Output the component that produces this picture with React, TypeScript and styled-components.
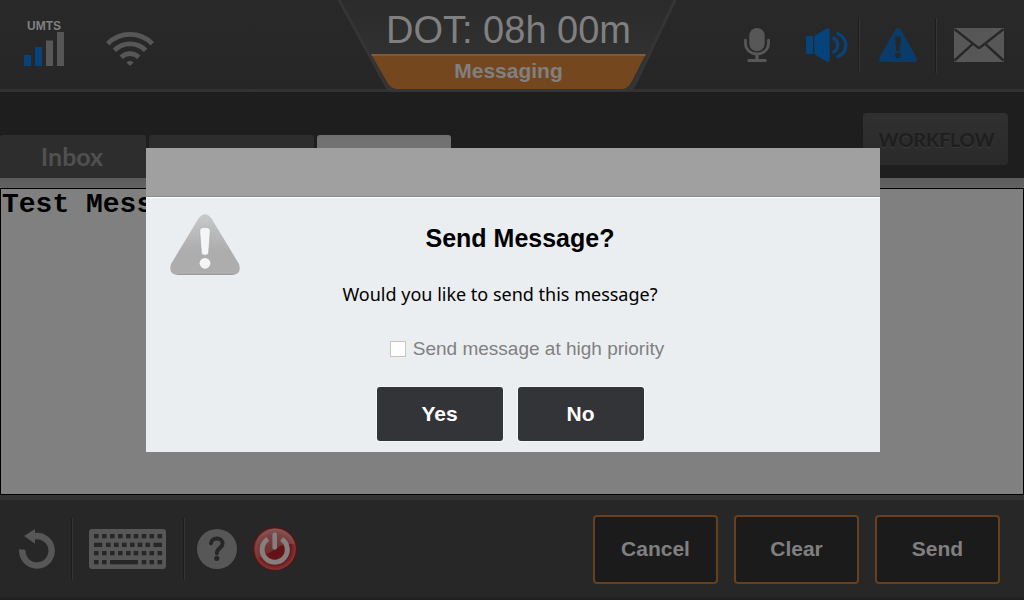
import React from "react";
import styled, { createGlobalStyle } from "styled-components";

const GlobalStyle = createGlobalStyle`
  *, *::before, *::after { box-sizing: border-box; }
  html, body { margin: 0; padding: 0; }
  body { background: #272727; font-family: "Liberation Sans", Arial, sans-serif; }
  button, input, textarea { font-family: inherit; margin: 0; }
`;

const grey = "#575757";
const blue = "#05437a";
const panel = "#272727";

const Screen = styled.div`
  display: flex;
  flex-direction: column;
  min-height: 100vh;
`;

const Header = styled.header`
  display: grid;
  grid-template-columns: 1fr 338px 1fr;
  height: 92px;
  padding-right: 10px;
  background: linear-gradient(#292929, #262626);
  border-bottom: 3px solid #323232;
`;

const StatusGroup = styled.div`
  display: flex;
  align-items: flex-start;
  gap: 42px;
  padding: 20px 0 0 24px;
`;

const Signal = styled.div`
  display: flex;
  flex-direction: column;
  align-items: center;
  font-size: 12px;
  line-height: 12px;
  font-weight: bold;
  color: #808080;
`;

const WifiBox = styled.div`
  padding-top: 12px;
`;

const Badge = styled.div`
  position: relative;
  height: 92px;
`;

const BadgeShape = styled.svg`
  position: absolute;
  inset: 0;
`;

const BadgeText = styled.div`
  position: relative;
  padding-left: 3px;
  text-align: center;
  color: #808080;
`;

const Clock = styled.div`
  padding-top: 4px;
  height: 54px;
  font-size: 38px;
  line-height: 52px;
`;

const Section = styled.h1`
  margin: 0;
  font-size: 21px;
  line-height: 34px;
  font-weight: bold;
`;

const IconGroup = styled.div`
  display: flex;
  justify-content: flex-end;
  align-items: center;
  padding: 0 10px 2px 0;
`;

const IconButton = styled.button<{ $after?: number }>`
  display: flex;
  padding: 0;
  border: 0;
  background: none;
  margin-right: ${(p) => p.$after ?? 0}px;
`;

const Divider = styled.span<{ $before: number; $after: number; $tall?: boolean }>`
  width: 2px;
  height: ${(p) => (p.$tall ? 62 : 55)}px;
  margin: 0 ${(p) => p.$after}px 0 ${(p) => p.$before}px;
  background: linear-gradient(to right, #1d1d1d 50%, #353535 50%);
`;

const TabBar = styled.nav`
  display: flex;
  justify-content: space-between;
  height: 86px;
  padding-right: 16px;
  background: #1e1e1e;
`;

const Tabs = styled.div`
  display: flex;
  align-items: flex-end;
  gap: 3px;
`;

const Tab = styled.button<{ $width: number; $active?: boolean }>`
  width: ${(p) => p.$width}px;
  height: 43px;
  padding: 0 2px 2px 0;
  border: 0;
  border-radius: 3px 3px 0 0;
  background: ${(p) => (p.$active ? "linear-gradient(#707070, #787878)" : "#2d2d2d")};
  color: #505050;
  font: bold 25px/30px Lato, sans-serif;
`;

const Workflow = styled.button`
  align-self: flex-start;
  width: 145px;
  height: 52px;
  margin-top: 21px;
  padding: 2px 0 0 2px;
  border: 0;
  border-radius: 4px;
  background: linear-gradient(#303030, #2a2a2a);
  color: #1f1f1f;
  text-shadow: 0 1px 0 #3a3a3a;
  font: 900 19px/24px Lato, sans-serif;
`;

const EditorFrame = styled.main`
  display: flex;
  flex: 1;
  padding-top: 10px;
  background: linear-gradient(#5c5c5c, #636363 10px);
`;

const Editor = styled.textarea`
  display: block;
  flex: 1;
  width: 100%;
  min-height: 200px;
  padding: 1px;
  border: 1px solid #000;
  border-radius: 0;
  outline: 0;
  resize: none;
  background: #808080;
  color: #000;
  font: bold 28px/30px "Liberation Mono", "Courier New", monospace;
`;

const Footer = styled.footer`
  display: flex;
  justify-content: space-between;
  align-items: center;
  height: 105px;
  padding: 0 24px 2px 19px;
  background: ${panel};
  border-top: 5px solid #323232;
  box-shadow: inset 0 -2px 0 #202020;
`;

const Tools = styled.div`
  display: flex;
  align-items: center;
`;

const Actions = styled.div`
  display: flex;
  gap: 16px;
`;

const ActionButton = styled.button`
  width: 125px;
  height: 69px;
  padding: 0;
  border: 2px solid #68401e;
  border-radius: 4px;
  background: #1b1b1b;
  color: #808080;
  font-size: 21px;
  font-weight: bold;
`;

const Overlay = styled.div`
  position: fixed;
  inset: 0;
  display: flex;
  align-items: center;
  justify-content: center;
  padding-left: 2px;
`;

const Dialog = styled.section`
  width: 734px;
  max-width: 100%;
  background: #ebeef1;
`;

const DialogBar = styled.div`
  height: 49px;
  background: #a0a0a0;
  border-bottom: 1px solid #8a8a8a;
  box-shadow: 0 1px 0 #ffffff;
`;

const DialogBody = styled.div`
  display: grid;
  grid-template-columns: 70px 1fr 70px;
  padding: 0 24px 11px;
`;

const AlertBox = styled.div`
  padding-top: 17px;
`;

const DialogContent = styled.div`
  display: flex;
  flex-direction: column;
  align-items: center;
  padding-top: 27px;
`;

const DialogTitle = styled.h2`
  margin: 0 0 30px;
  padding-left: 14px;
  font-size: 25px;
  line-height: 28px;
  color: #000;
`;

const DialogText = styled.p`
  margin: 0 0 31px;
  padding-right: 26px;
  font-family: "Noto Sans", sans-serif;
  font-size: 18px;
  line-height: 24px;
  color: #000;
`;

const Priority = styled.label`
  display: flex;
  align-items: center;
  gap: 7px;
  margin-bottom: 26px;
  padding-left: 28px;
  font-size: 19px;
  line-height: 24px;
  color: #808080;
`;

const CheckBox = styled.input`
  appearance: none;
  width: 16px;
  height: 16px;
  border: 1px solid #c9c7ba;
  background: #fff;
`;

const Choices = styled.div`
  display: flex;
  gap: 15px;
  padding-right: 6px;
`;

const ChoiceButton = styled.button`
  width: 126px;
  height: 54px;
  padding: 0;
  border: 0;
  border-radius: 3px;
  background: #333438;
  box-shadow: 0 0 0 1px #f4f6f8;
  color: #fff;
  font-size: 21px;
  font-weight: bold;
`;

const SignalIcon = () => (
  <svg width="40" height="34" fill={grey}>
    <path fill={blue} d="M0 23h7v11H0zM11 15h7v19h-7z" />
    <path d="M22 8.500h7V34h-7zM33 0h7v34h-7z" />
  </svg>
);

const WifiIcon = () => (
  <svg width="48" height="34" fill="none" stroke={grey} strokeWidth="4.800">
    <path d="M1.700 11.700A31.500 31.500 0 0 1 46.300 11.700" />
    <path d="M8.400 18.400A22 22 0 0 1 39.600 18.400" />
    <path d="M15.200 25.200A12.500 12.500 0 0 1 32.800 25.200" />
    <path stroke="none" fill={grey} d="M24 34L20.500 30.500A5 5 0 0 1 27.500 30.500Z" />
  </svg>
);

const MicIcon = () => (
  <svg width="26" height="34" fill={grey}>
    <rect x="5.300" width="15.400" height="23.300" rx="7.500" />
    <path fill="none" stroke={grey} strokeWidth="2.800" strokeLinecap="round" d="M1.500 12.200V15.500A11.500 10.500 0 0 0 24.500 15.500V12.200" />
    <rect x="11.300" y="26" width="3.400" height="6" />
    <rect x="3.300" y="31" width="19.400" height="3" rx="1.500" />
  </svg>
);

const SpeakerIcon = () => (
  <svg width="42" height="34" fill={blue}>
    <rect y="8" width="7" height="18" rx="1" />
    <path d="M8.300 8L20.500 0.600Q23.700 -0.500 23.700 2V32Q23.700 34.500 20.500 33.400L8.300 26Z" />
    <g fill="none" stroke={blue} strokeWidth="3.400" strokeLinecap="round">
      <path d="M27.800 10.200A8.100 8.100 0 0 1 27.800 24" />
      <path d="M32 5.800A12.300 12.300 0 0 1 32 28.600" />
    </g>
  </svg>
);

const WarningIcon = () => (
  <svg width="38" height="34">
    <path fill="#0b3c69" d="M16.300 1.500Q19 -1.200 21.700 1.500L37.500 29.500Q38.800 33.800 35 34H3Q-0.800 33.800 0.500 29.500Z" />
    <path fill={panel} d="M16 9Q19 7.500 22 9L20.800 22.500Q19 23.600 17.200 22.500Z" />
    <circle cx="19" cy="27.300" r="2.900" fill={panel} />
  </svg>
);

const MailIcon = () => (
  <svg width="50" height="34">
    <rect width="50" height="34" rx="1" fill={grey} />
    <path fill="none" stroke={panel} strokeWidth="2.400" d="M0.500 1.200L22.500 18.300Q25 21.500 27.500 18.300L49.500 1.200M0.500 32.500L18.500 16.200M49.500 32.500L31.500 16.200" />
  </svg>
);

const UndoIcon = () => (
  <svg width="36" height="40">
    <path fill="none" stroke={grey} strokeWidth="6.400" d="M15 7.400A14.700 14.700 0 1 1 3.300 20.600" />
    <path fill={grey} d="M5 7L16 0V14.700Z" />
  </svg>
);

const keyRow = [5, 13, 21, 29, 37, 44.7, 52.7, 60.5, 68.5];
const Keys = ({ xs, y }: { xs: number[]; y: number }) => (
  <>
    {xs.map((x) => (
      <rect key={x} x={x} y={y} width="4.600" height="4.300" />
    ))}
  </>
);

const KeyboardIcon = () => (
  <svg width="77" height="40" fill={panel}>
    <rect width="77" height="40" rx="3" fill={grey} />
    <Keys xs={keyRow} y={5} />
    <rect x="5" y="13.700" width="8.200" height="4.300" />
    <Keys xs={[17, 25, 33, 41, 48.7, 56.5]} y={13.7} />
    <rect x="64.500" y="13.700" width="8.500" height="4.300" />
    <Keys xs={keyRow} y={22} />
    <Keys xs={[5, 13, 52.7, 60.5, 68.5]} y={31} />
    <rect x="21" y="31" width="28" height="4.300" />
  </svg>
);

const HelpIcon = () => (
  <svg width="40" height="40">
    <circle cx="20" cy="20" r="20" fill={grey} />
    <path fill="none" stroke={panel} strokeWidth="3.900" strokeLinecap="round" d="M14 14.300C14.500 7.800 25.600 8 25.600 14.500C25.600 19 19.800 19 19.800 24.200" />
    <circle cx="19.800" cy="29.300" r="2.600" fill={panel} />
  </svg>
);

const PowerIcon = () => (
  <svg width="44" height="46">
    <defs>
      <radialGradient id="power-fill" cx="0.500" cy="0.500" r="0.500">
        <stop offset="0" stopColor="#5e1215" />
        <stop offset="0.700" stopColor="#6a1417" />
        <stop offset="0.880" stopColor="#7c2c2e" />
        <stop offset="1" stopColor="#84403f" />
      </radialGradient>
      <linearGradient id="power-gloss" x1="0" y1="0" x2="0" y2="1">
        <stop offset="0" stopColor="#8a7070" stopOpacity="0.600" />
        <stop offset="1" stopColor="#8a5050" stopOpacity="0.350" />
      </linearGradient>
    </defs>
    <circle cx="22" cy="23" r="21.400" fill="url(#power-fill)" stroke="#561410" strokeWidth="1.200" />
    <path fill="url(#power-gloss)" d="M2.500 21A19.800 19.800 0 0 1 41.500 18Q31 17 24 22T5 32Q2 27 2.500 21Z" />
    <g fill="none" stroke="#858080">
      <path strokeWidth="5" d="M14.800 13A12.600 12.600 0 1 0 28.600 13" />
      <path strokeWidth="4.600" strokeLinecap="round" d="M21.700 8.800V21.500" />
    </g>
  </svg>
);

const AlertIcon = () => (
  <svg width="70" height="61">
    <defs>
      <linearGradient id="alert-fill" x1="0" y1="0" x2="0" y2="1">
        <stop offset="0" stopColor="#c8c9ca" />
        <stop offset="0.600" stopColor="#adadad" />
        <stop offset="1" stopColor="#adadad" />
      </linearGradient>
    </defs>
    <path fill="url(#alert-fill)" d="M28.500 4.500Q35 -4 41.500 4.500L69 50Q72 60 63 61H7Q-2 60 1 50Z" />
    <path stroke="#999999" d="M7 60.500H63" />
    <path fill="#f4f5f7" stroke="#9fa3a6" strokeWidth="0.600" d="M29.700 17Q29.700 13.300 35 13.300T40.300 17L38.600 39Q38.300 41.200 35 41.200T31.400 39Z" />
    <circle cx="35" cy="49.300" r="5.400" fill="#f4f5f7" />
  </svg>
);

export default function App() {
  return (
    <>
      <GlobalStyle />
      <Screen>
        <Header>
          <StatusGroup>
            <Signal>
              UMTS
              <SignalIcon />
            </Signal>
            <WifiBox>
              <WifiIcon />
            </WifiBox>
          </StatusGroup>
          <Badge>
            <BadgeShape width="338" height="92">
              <defs>
                <linearGradient id="badge-fill" x1="0" y1="0" x2="0" y2="1">
                  <stop offset="0" stopColor="#2b2b2b" />
                  <stop offset="1" stopColor="#343434" />
                </linearGradient>
              </defs>
              <path fill="url(#badge-fill)" stroke="#353535" strokeWidth="3" d="M0 -2L46 82Q50 90.500 56 90.500H288Q294 90.500 298 82L338 -2" />
              <path fill="#75471f" d="M33 54H308L294 81Q290 89 284 89H59Q53 89 49 82Z" />
              <path fill="#855a32" d="M33 54H308L307 56H34Z" />
            </BadgeShape>
            <BadgeText>
              <Clock>DOT: 08h 00m</Clock>
              <Section>Messaging</Section>
            </BadgeText>
          </Badge>
          <IconGroup>
            <IconButton aria-label="Microphone" $after={36}><MicIcon /></IconButton>
            <IconButton aria-label="Volume"><SpeakerIcon /></IconButton>
            <Divider $before={10} $after={19} />
            <IconButton aria-label="Alerts"><WarningIcon /></IconButton>
            <Divider $before={18} $after={17} />
            <IconButton aria-label="Mail"><MailIcon /></IconButton>
          </IconGroup>
        </Header>
        <TabBar>
          <Tabs>
            <Tab $width={146}>Inbox</Tab>
            <Tab $width={165} aria-label="Sent" />
            <Tab $width={134} $active aria-label="Compose" />
          </Tabs>
          <Workflow>WORKFLOW</Workflow>
        </TabBar>
        <EditorFrame>
          <Editor aria-label="Message" defaultValue="Test Message" spellCheck={false} />
        </EditorFrame>
        <Footer>
          <Tools>
            <IconButton aria-label="Back"><UndoIcon /></IconButton>
            <Divider $before={16} $after={16} $tall />
            <IconButton aria-label="Keyboard"><KeyboardIcon /></IconButton>
            <Divider $before={17} $after={12} $tall />
            <IconButton aria-label="Help" $after={16}><HelpIcon /></IconButton>
            <IconButton aria-label="Power"><PowerIcon /></IconButton>
          </Tools>
          <Actions>
            <ActionButton>Cancel</ActionButton>
            <ActionButton>Clear</ActionButton>
            <ActionButton>Send</ActionButton>
          </Actions>
        </Footer>
      </Screen>
      <Overlay>
        <Dialog role="dialog" aria-modal="true" aria-labelledby="dialog-title">
          <DialogBar />
          <DialogBody>
            <AlertBox>
              <AlertIcon />
            </AlertBox>
            <DialogContent>
              <DialogTitle id="dialog-title">Send Message?</DialogTitle>
              <DialogText>Would you like to send this message?</DialogText>
              <Priority htmlFor="priority">
                <CheckBox type="checkbox" id="priority" />
                Send message at high priority
              </Priority>
              <Choices>
                <ChoiceButton>Yes</ChoiceButton>
                <ChoiceButton>No</ChoiceButton>
              </Choices>
            </DialogContent>
          </DialogBody>
        </Dialog>
      </Overlay>
    </>
  );
}
